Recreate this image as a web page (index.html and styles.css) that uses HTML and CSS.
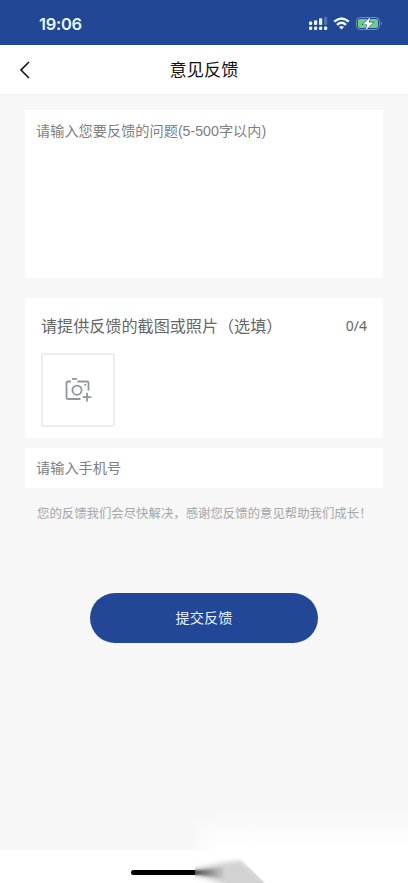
FILE: index.html
```html
<!DOCTYPE html>
<html lang="zh-CN">
<head>
<meta charset="utf-8">
<title>意见反馈</title>
<link rel="stylesheet" href="styles.css">
</head>
<body>
<div class="screen">
  <div class="status">
    <span class="time">19:06</span>
    <svg class="status-icons" width="76" height="20" viewBox="0 0 76 20">
      <g fill="#eaf5ff">
        <rect x="1" y="7.4" width="3.2" height="3.6" rx="1"/>
        <rect x="6" y="6.2" width="3.2" height="4.8" rx="1"/>
        <rect x="11" y="4.2" width="3.2" height="6.8" rx="1"/>
        <rect x="16" y="3" width="3.2" height="8" rx="1" opacity=".25"/>
        <rect x="1" y="12.5" width="3.2" height="3.5" rx="1"/>
        <rect x="6" y="12.5" width="3.2" height="3.5" rx="1"/>
        <rect x="11" y="12.5" width="3.2" height="3.5" rx="1"/>
        <rect x="16" y="12.5" width="3.2" height="3.5" rx="1"/>
      </g>
      <g fill="none" stroke="#f2f9ff" stroke-width="2.4">
        <path d="M26.2 7.7Q33.5 1.3 40.8 7.7"/>
        <path d="M29 10.8Q33.5 6.8 38 10.8"/>
      </g>
      <path fill="#f2f9ff" d="M31 12.9Q33.5 10.9 36 12.9L33.5 15.6Z"/>
      <rect x="48.5" y="3.5" width="23" height="12" rx="3.6" fill="none" stroke="#7095a9"/>
      <rect x="50" y="5" width="20" height="9" rx="2" fill="#6dce88"/>
      <path d="M73 7.6Q75 9.5 73 11.4Z" fill="#7095a9"/>
      <path d="M62.3 3L54.8 10.5H59.2L57.6 16.2L65.4 8.4H60.8Z" fill="#fff" stroke="#27558a" stroke-width="1.1" paint-order="stroke"/>
    </svg>
  </div>
  <header class="nav">
    <svg class="back" width="12" height="18" viewBox="0 0 12 18"><path d="M10 1L2 9L10 17" fill="none" stroke="#111" stroke-width="1.6"/></svg>
    <h1>意见反馈</h1>
  </header>
  <main>
    <section class="card message">请输入您要反馈的问题(5-500字以内)</section>
    <section class="card photos">
      <div class="photo-head"><span>请提供反馈的截图或照片（选填）</span><span class="count">0/4</span></div>
      <div class="upload">
        <svg width="28" height="26" viewBox="0 0 28 26" fill="none" stroke="#8f979c" stroke-width="1.8">
          <path d="M7 4.5H4Q2.5 4.5 2.5 6V20.5Q2.5 22 4 22H16.5M13.5 4.5H23Q24.5 4.5 24.5 6V13.5"/>
          <path d="M8 1.8H13M23 15.8V24.4M18.7 20.1H27.3"/>
          <circle cx="13" cy="13.2" r="4.6"/>
          <circle cx="21.3" cy="7.8" r="1.1" fill="#8f979c" stroke="none"/>
        </svg>
      </div>
    </section>
    <section class="card phone">请输入手机号</section>
    <p class="note">您的反馈我们会尽快解决，感谢您反馈的意见帮助我们成长！</p>
    <button class="submit">提交反馈</button>
  </main>
  <footer class="home">
    <div class="home-line"></div>
    <div class="haze"></div>
    <svg class="fan" width="72" height="28" viewBox="0 0 72 28">
      <defs>
        <linearGradient id="core" x1="0" x2="1" y1="0" y2="0"><stop offset="0" stop-color="#000"/><stop offset=".35" stop-color="#000" stop-opacity=".5"/><stop offset="1" stop-color="#000" stop-opacity="0"/></linearGradient>
        <filter id="soft" x="-30%" y="-50%" width="160%" height="200%"><feGaussianBlur stdDeviation="3 2.4"/></filter>
        <filter id="core-soft" x="-30%" y="-60%" width="160%" height="220%"><feGaussianBlur stdDeviation="1 1.5"/></filter>
        <clipPath id="edge"><path d="M0 0H42L70 28H0Z"/></clipPath>
      </defs>
      <g clip-path="url(#edge)">
        <path d="M-4 14L20 9L46 5L84 36H40Q20 24 -4 20Z" fill="#d2d2d2" filter="url(#soft)"/>
        <path d="M-6 15.5H2L30 12V24L2 19.5H-6Z" fill="url(#core)" filter="url(#core-soft)"/>
      </g>
    </svg>
  </footer>
</div>
</body>
</html>
```
FILE: styles.css
```css
* { box-sizing: border-box; }
body {
  margin: 0;
  font-family: "Liberation Sans", "Noto Sans CJK SC", sans-serif;
}
.screen {
  width: 408px;
  height: 883px;
  display: flex;
  flex-direction: column;
  overflow: hidden;
  background: #f7f7f7;
}
.status {
  height: 45px;
  flex: none;
  display: flex;
  justify-content: space-between;
  align-items: flex-start;
  padding: 14px 24px 0 39px;
  background: #214796;
}
.time {
  font: 600 16.5px/20px Inter, sans-serif;
  letter-spacing: -0.3px;
  color: #e3f5ff;
}
.status-icons { display: block; }
.nav {
  height: 49px;
  flex: none;
  display: grid;
  grid-template-columns: 60px 1fr 60px;
  align-items: center;
  background: #fff;
  box-shadow: 0 1px 1px #f0f0f0;
}
.back { margin-left: 19px; }
h1 {
  margin: 0;
  text-align: center;
  font-size: 17.2px;
  font-weight: 400;
  line-height: 24px;
  color: #111;
}
main {
  flex: 1;
  display: flex;
  flex-direction: column;
  padding: 16px 25px 0;
}
.card { background: #fff; flex: none; }
.message {
  height: 168px;
  padding: 11px;
  font-size: 14.2px;
  line-height: 20px;
  color: #808080;
}
.photos {
  height: 140px;
  margin-top: 20px;
  padding: 15px 16px 0;
}
.photo-head {
  display: flex;
  justify-content: space-between;
  align-items: center;
  height: 24px;
  font-size: 16.1px;
  color: #666;
  white-space: nowrap;
}
.count { font: 14px/20px "Noto Sans", sans-serif; padding-top: 2px; }
.upload {
  width: 74px;
  height: 74px;
  margin-top: 16px;
  display: grid;
  place-items: center;
  border: 2px solid #ececec;
  border-radius: 2px;
}
.phone {
  height: 40px;
  margin-top: 10px;
  padding: 0 11px;
  font-size: 14.2px;
  line-height: 40px;
  color: #808080;
}
.note {
  margin: 16px 0 0 12px;
  font-size: 12.4px;
  line-height: 20px;
  color: #a6a6a6;
  white-space: nowrap;
}
.submit {
  width: 228px;
  height: 50px;
  margin: 69px 0 0 65px;
  padding: 0 0 2px;
  border: 0;
  border-radius: 25px;
  background: #214796;
  color: #e9f2ff;
  font: inherit;
  font-size: 14.2px;
}
.home {
  position: relative;
  display: flex;
  height: 33px;
  flex: none;
  background: #fff;
}
.home-line {
  width: 72px;
  height: 5px;
  margin: 20px 0 0 131px;
  border-radius: 3px;
  background: #000;
}
.haze {
  position: absolute;
  left: 195px;
  right: 0;
  bottom: 0;
  height: 73px;
  background: linear-gradient(to bottom, #fff0, #ffffffb0 38%, #fff 60%);
  -webkit-mask-image: linear-gradient(to right, #0006, #000 22px);
  mask-image: linear-gradient(to right, #0006, #000 22px);
}
.fan {
  position: absolute;
  left: 195px;
  bottom: 0;
}
```
